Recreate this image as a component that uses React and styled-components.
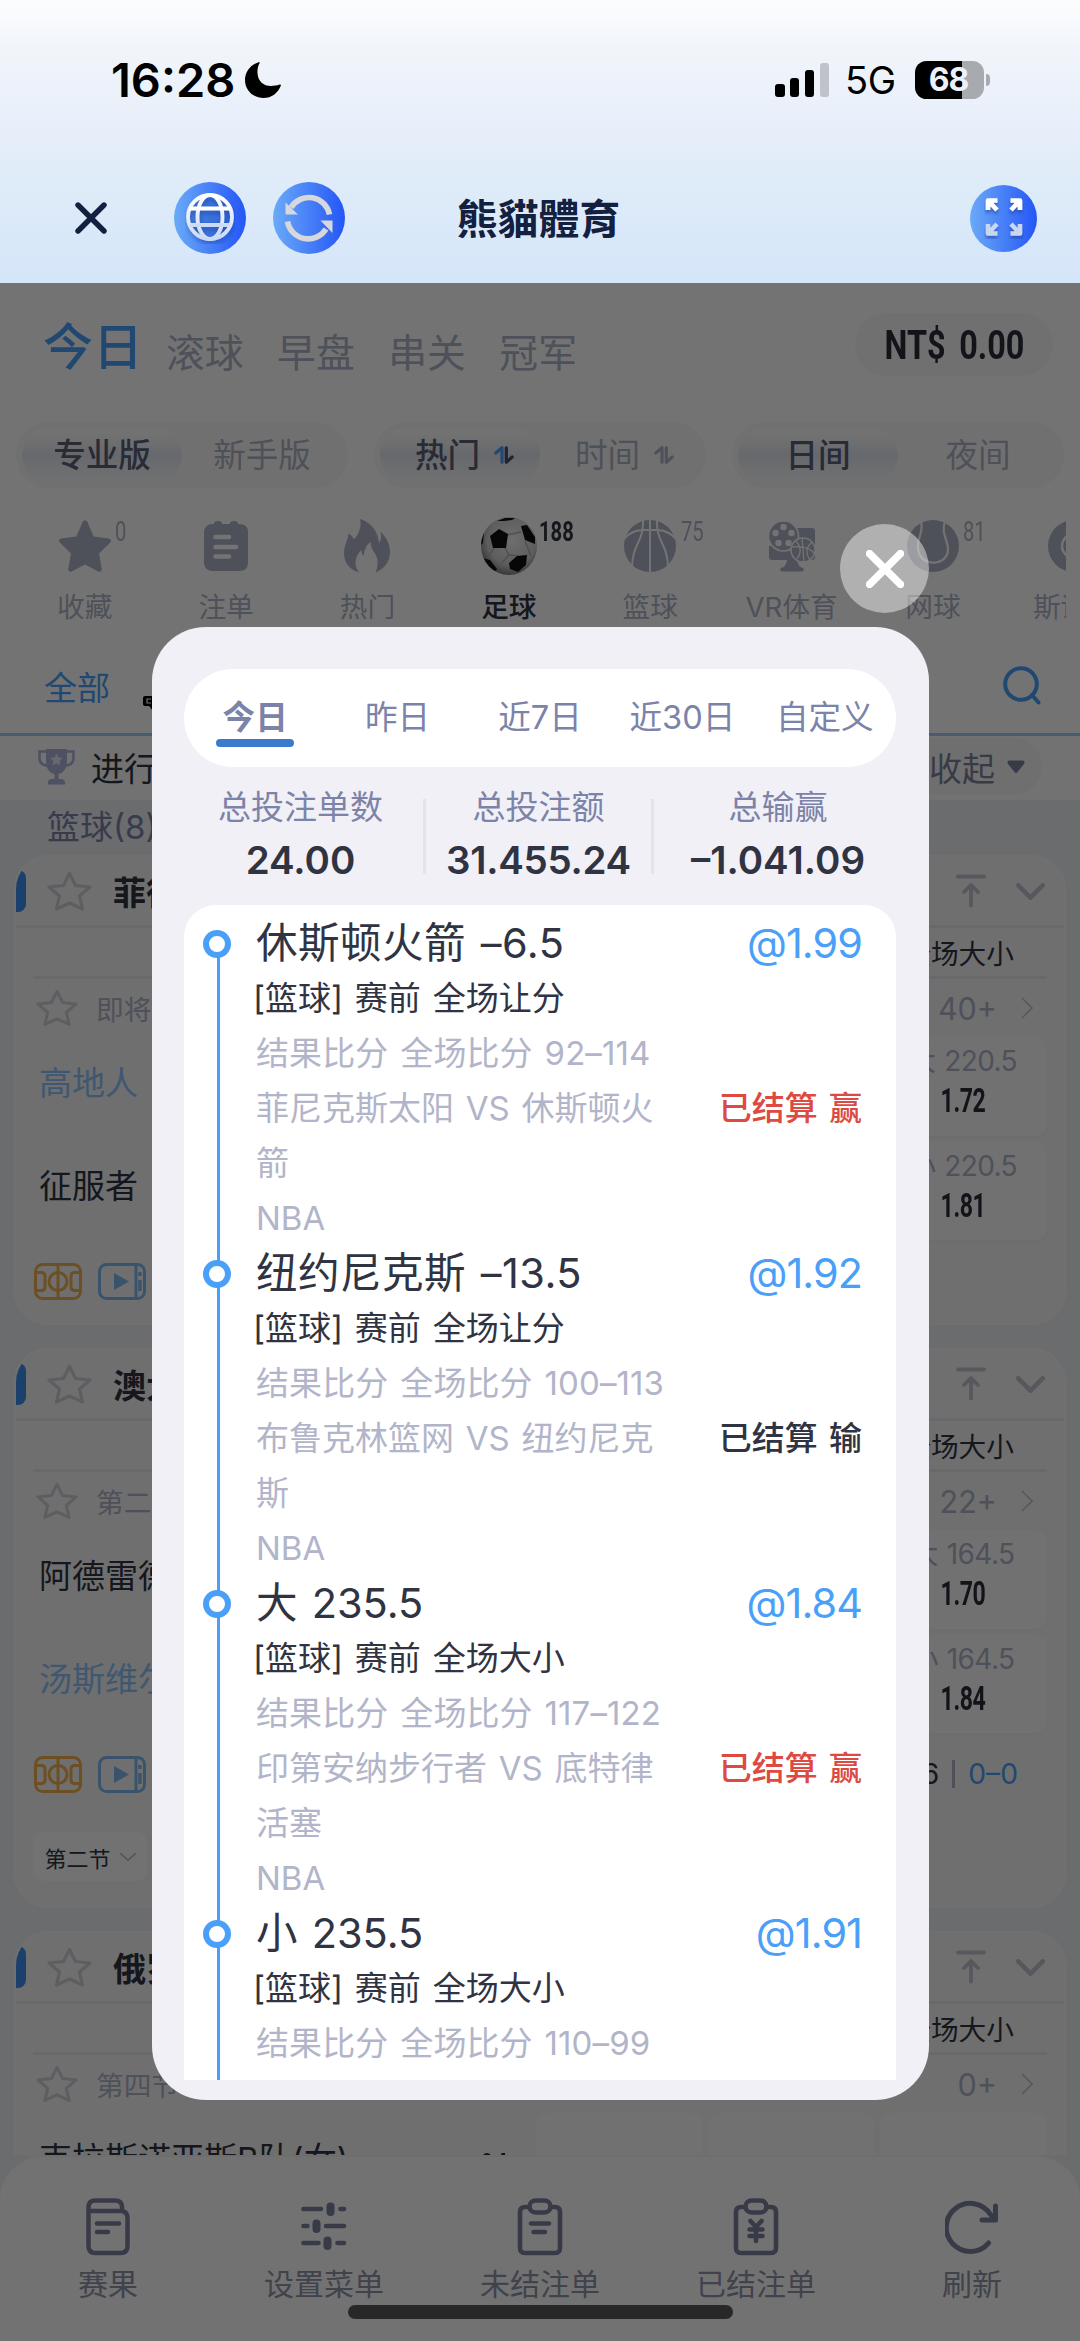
import React from "react";
import styled, { createGlobalStyle } from "styled-components";

const sans = `Inter, "Noto Sans CJK SC", sans-serif`;
const ink = "#303442";
const muted = "#aeb3c6";
const faint = "#c0c3d0";
const slate = "#7c83a8";
const blue = "#4a9ff9";

const Global = createGlobalStyle`
  *, *::before, *::after { box-sizing: border-box; }
  body { margin: 0; background: #fff; font-family: ${sans}; color: ${ink}; }
  svg { display: block; flex: none; }
`;

const Screen = styled.div`
  width: 1080px;
  height: 2341px;
  overflow: hidden;
  display: flex;
  flex-direction: column;
`;

/* ---------- header ---------- */

const Header = styled.header`
  height: 283px;
  flex: none;
  background: linear-gradient(#fdfdfe 0, #f1f5fa 48px, #ebf1fa 100px, #e8eef9 133px, #e0ecf8 168px, #d5e6fa 283px);
`;

const StatusBar = styled.div`
  height: 160px;
  padding: 0 90px 0 111px;
  display: flex;
  align-items: center;
  color: #000;
`;

const Clock = styled.span`
  font-size: 47px;
  font-weight: 600;
  letter-spacing: 0;
  width: 134px;
  line-height: 60px;
  white-space: nowrap;
`;

const StatusRight = styled.div`
  margin-left: auto;
  display: flex;
  align-items: center;
`;

const Bars = styled.div`
  display: flex;
  align-items: flex-end;
  gap: 5.5px;
  height: 34px;
  margin-right: 16px;
`;

const SignalBar = styled.i`
  width: 9.3px;
  height: ${(p) => p.$h}px;
  border-radius: 3px;
  background: ${(p) => (p.$off ? "#bfc2c9" : "#000")};
`;

const Network = styled.span`
  font-size: 38px;
  font-weight: 400;
  line-height: 40px;
  width: 70px;
  letter-spacing: -0.3px;
`;

const Battery = styled.div`
  width: 69px;
  height: 38px;
  border-radius: 11.5px;
  background: linear-gradient(90deg, #000 68%, #a7abaf 68%);
  color: #edf1fa;
  font-size: 32px;
  font-weight: 700;
  letter-spacing: -1px;
  line-height: 38px;
  text-align: center;
  padding-right: 2px;
`;

const BatteryTip = styled.i`
  width: 4px;
  height: 12px;
  margin-left: 2px;
  border-radius: 0 4px 4px 0;
  background: #a7abaf;
`;

const NavBar = styled.div`
  height: 116px;
  padding: 0 43px 0 75px;
  display: flex;
  align-items: center;
`;

const RoundIcon = styled.span`
  width: ${(p) => p.$size}px;
  height: ${(p) => p.$size}px;
  margin-left: ${(p) => p.$gap || 0}px;
  border-radius: 50%;
  background: linear-gradient(90deg, #6aaaf8, #2456f6);
  display: flex;
  align-items: center;
  justify-content: center;
`;

const Title = styled.h1`
  margin: 0 auto 2px 112px;
  font: 700 40.8px/60px "Noto Sans CJK TC", sans-serif;
  color: #13203f;
`;

/* ---------- page ---------- */

const Page = styled.main`
  position: relative;
  flex: 1;
  display: flex;
  flex-direction: column;
  overflow: hidden;
  background: #fff;
`;

const TopTabs = styled.div`
  height: 139px;
  flex: none;
  padding: 0 27px 0 43px;
  display: flex;
  align-items: flex-start;
`;

const TopTab = styled.span`
  font-size: ${(p) => (p.$active ? 50 : 38.8)}px;
  font-weight: ${(p) => (p.$active ? 500 : 400)};
  line-height: ${(p) => (p.$active ? 128 : 140)}px;
  color: ${(p) => (p.$active ? blue : muted)};
  margin-right: ${(p) => (p.$active ? 23 : 33.5)}px;
  white-space: nowrap;
`;

const Balance = styled.span`
  margin: 30px 0 0 auto;
  width: 198px;
  height: 63px;
  border-radius: 32px;
  background: #f8f8f8;
  display: flex;
  align-items: center;
  justify-content: center;
  word-spacing: 7px;
  padding-top: 2px;
`;

const Narrow = styled.span`
  display: inline-block;
  font-family: Roboto, sans-serif;
  font-weight: ${(p) => p.$weight || 700};
  font-size: ${(p) => p.$size}px;
  line-height: 1.2;
  white-space: pre;
  transform: scaleX(${(p) => p.$scale || 0.7});
  transform-origin: ${(p) => p.$origin || "center"};
  color: ${(p) => p.$color || "#2b2e3a"};
`;

const Toggles = styled.div`
  height: 66px;
  flex: none;
  padding: 0 16px;
  display: flex;
  justify-content: space-between;
`;

const Toggle = styled.div`
  width: 332px;
  padding: 5px 6px;
  border-radius: 33px;
  background: #f8f8f8;
  display: flex;
`;

const ToggleItem = styled.span`
  flex: 1;
  padding: 0 0 5px ${(p) => (p.$sortable ? 9 : 0)}px;
  border-radius: 28px;
  display: flex;
  align-items: center;
  justify-content: center;
  gap: 14px;
  font-size: 32.6px;
  font-weight: ${(p) => (p.$active ? 500 : 400)};
  color: ${(p) => (p.$active ? "#5b5f78" : muted)};
  background: ${(p) => (p.$active ? "linear-gradient(#fdfdfd 10%, #f2f3f6 32%, #e3e7f0 50%, #eef0f5 68%, #f7f9fc)" : "none")};
  svg { margin-top: 4px; }
`;

const Sports = styled.div`
  height: 153px;
  flex: none;
  margin: 0 14px;
  padding-top: 31px;
  display: flex;
  overflow: hidden;
`;

const Sport = styled.div`
  position: relative;
  width: 141.4px;
  flex: none;
  display: flex;
  flex-direction: column;
  align-items: center;
  gap: 15px;
  font-size: 27.7px;
  line-height: 38px;
  font-weight: ${(p) => (p.$active ? 500 : 400)};
  color: ${(p) => (p.$active ? ink : muted)};
  white-space: nowrap;
`;

const SportIcon = styled.span`
  height: 54px;
  display: flex;
  align-items: center;
  justify-content: center;
`;

const Count = styled.span`
  position: absolute;
  left: 101px;
  top: -7px;
`;

const LeagueRow = styled.div`
  height: 95px;
  flex: none;
  padding: 0 39px 3px 44px;
  display: flex;
  align-items: center;
  border-bottom: 3px solid #a3cdf6;
  font-size: 33px;
  color: ${blue};
`;

const LeagueLogo = styled.span`
  margin: 26px auto 0 33px;
`;

const Progress = styled.div`
  height: 64px;
  flex: none;
  padding: 0 38px 3px;
  display: flex;
  align-items: center;
  gap: 16px;
  background: #fcfcfc;
  font-size: 33px;
  color: ${ink};
`;

const Collapse = styled.span`
  margin-left: auto;
  height: 57px;
  padding: 0 17px 0 26px;
  border-radius: 28px;
  background: #f7f7f7;
  display: flex;
  align-items: center;
  gap: 12px;
  color: #7d8199;
`;

const Feed = styled.section`
  flex: 1;
  min-height: 0;
  overflow: hidden;
  background: #eeeff3;
  padding: 0 14px;
`;

const FeedHeading = styled.div`
  height: 55px;
  padding-left: 33px;
  font-size: 33px;
  line-height: 54px;
  color: ${slate};
`;

const Card = styled.article`
  height: ${(p) => p.$h}px;
  margin-bottom: 23px;
  border: 2px solid #f9f9fa;
  border-radius: 34px;
  background: #f6f6f6;
  overflow: hidden;
  display: flex;
  flex-direction: column;
`;

const CardHead = styled.div`
  height: 71px;
  flex: none;
  padding: 0 19px 0 0;
  display: flex;
  align-items: center;
  border-bottom: 3px solid #e8e9ed;
  font-size: 33px;
  font-weight: 700;
`;

const Marker = styled.i`
  width: 10px;
  height: 42px;
  margin-right: 21px;
  border-radius: 0 8px 8px 0;
  background: #3f8ff0;
`;

const CardTitle = styled.span`
  margin: 0 auto 0 21px;
`;

const HeadIcons = styled.span`
  display: flex;
  align-items: center;
  gap: 30px;
`;

const MarketHead = styled.div`
  height: 51px;
  flex: none;
  margin: 0 17px;
  padding-right: 33px;
  border-bottom: 3px solid #e8e9ed;
  display: flex;
  align-items: center;
  justify-content: flex-end;
  font-size: 27.7px;
`;

const MetaRow = styled.div`
  height: 58px;
  flex: none;
  padding: 0 31px 0 20px;
  display: flex;
  align-items: center;
  font-size: 27.7px;
  color: ${muted};
`;

const Period = styled.span`
  margin-left: 18px;
  width: 190px;
  white-space: nowrap;
`;

const Tick = styled.i`
  width: 2px;
  height: 32px;
  margin-left: 8px;
  background: #b9bcc9;
`;

const More = styled.span`
  margin: 0 24px 0 auto;
  font-size: 30.5px;
`;

const Match = styled.div`
  height: 203px;
  flex: none;
  padding: 0 17px 0 23px;
  display: flex;
  justify-content: space-between;
`;

const Teams = styled.div`
  flex: 1;
`;

const Team = styled.div`
  height: 103px;
  padding: 21px 23px 0 0;
  display: flex;
  justify-content: space-between;
  font-size: 33px;
  line-height: 50px;
  color: ${(p) => (p.$lead ? "#8cc2f8" : ink)};
  white-space: nowrap;
`;

const TeamScore = styled.span`
  padding-top: 6px;
`;

const OddsGrid = styled.div`
  display: grid;
  grid-template-columns: repeat(3, 167px);
  grid-auto-rows: 98.5px;
  gap: 6px 5px;
`;

const OddsCell = styled.div`
  border-radius: 12px;
  background: #fbfbfb;
  box-shadow: 0 3px 4px #f1f1f2;
  display: flex;
  flex-direction: column;
  align-items: center;
  padding: 4px 2px 0 0;
  font-size: 28px;
  line-height: 40px;
  color: ${muted};
  white-space: nowrap;
  letter-spacing: -0.6px;
`;

const OddsLine = styled.span`
  word-spacing: 1.5px;
`;

const MediaRow = styled.div`
  height: 82px;
  flex: none;
  padding: 0 46px 0 18px;
  display: flex;
  align-items: center;
  gap: 16px;
`;

const Scores = styled.span`
  margin-left: auto;
  display: flex;
  align-items: center;
  gap: 13px;
  font-size: 28.2px;
  color: ${ink};
`;

const ScoreRule = styled.i`
  width: 3px;
  height: 28px;
  background: ${muted};
`;

const ScoreBlue = styled.span`
  color: ${blue};
`;

const PeriodButton = styled.div`
  width: 114px;
  height: 49px;
  margin: 17px 0 0 17px;
  border-radius: 10px;
  background: #fcfcfc;
  display: flex;
  align-items: center;
  justify-content: center;
  gap: 9px;
  font-size: 22px;
`;

const TabBarWrap = styled.div`
  height: 186px;
  flex: none;
  background: #eeeff3;
`;

const TabBar = styled.nav`
  height: 186px;
  border-top: 2px solid #f4f4f6;
  border-radius: 44px 44px 0 0;
  background: #fdfdfd;
  padding-top: 41px;
  display: grid;
  grid-template-columns: repeat(5, 1fr);
`;

const TabItem = styled.div`
  display: flex;
  flex-direction: column;
  align-items: center;
  gap: 7px;
  font-size: 30px;
  line-height: 42px;
  color: #8f93a9;
`;

/* ---------- dialog ---------- */

const Overlay = styled.div`
  position: absolute;
  inset: 0;
  padding-top: 344px;
  background: rgba(0, 0, 0, 0.55);
`;

const Dialog = styled.div`
  position: relative;
  width: 777px;
  height: 1473px;
  margin-left: 152px;
  padding: 42px 33px 20px 32px;
  border-radius: 54px;
  background: #f1f0f6;
  display: flex;
  flex-direction: column;
`;

const Close = styled.button`
  position: absolute;
  right: 0;
  top: -103px;
  width: 89px;
  height: 89px;
  padding: 0;
  border: 0;
  border-radius: 50%;
  background: rgba(255, 255, 255, 0.44);
  display: flex;
  align-items: center;
  justify-content: center;
`;

const RangeTabs = styled.div`
  height: 98px;
  flex: none;
  border-radius: 49px;
  background: #fff;
  display: grid;
  grid-template-columns: repeat(5, 1fr);
`;

const RangeTab = styled.span`
  position: relative;
  text-align: center;
  font-size: 32.6px;
  line-height: 97px;
  font-weight: ${(p) => (p.$active ? 700 : 400)};
  color: ${slate};
  &::after {
    content: "";
    display: ${(p) => (p.$active ? "block" : "none")};
    width: 78px;
    height: 8px;
    margin: -27px auto 0;
    border-radius: 4px;
    background: #3a7ccb;
  }
`;

const Stats = styled.div`
  height: 138px;
  flex: none;
  margin: 0 -7px 0 -6px;
  padding-top: 15px;
  display: grid;
  grid-template-columns: 245px 231px 248px;
`;

const Stat = styled.div`
  text-align: center;
  font-size: 33px;
  line-height: 50px;
  color: ${slate};
`;

const StatValue = styled.div`
  font-size: 38.5px;
  line-height: 56px;
  font-weight: 600;
  color: ${ink};
  white-space: nowrap;
  letter-spacing: ${(p) => p.$ls || 0}px;
`;

const StatMiddle = styled(Stat)`
  background:
    linear-gradient(#e3e3e9, #e3e3e9) 0 17px / 3px 75px no-repeat,
    linear-gradient(#e3e3e9, #e3e3e9) 100% 17px / 3px 75px no-repeat;
`;

const BetList = styled.div`
  flex: 1;
  min-height: 0;
  padding: 11px 34px 0 19px;
  border-radius: 32px 32px 0 0;
  background: #fff;
  overflow: hidden;
`;

const Bet = styled.div`
  display: flex;
  height: 330px;
`;

const Rail = styled.div`
  width: 28px;
  flex: none;
  display: flex;
  flex-direction: column;
  align-items: center;
  padding-top: 14px;
  margin-right: 25px;
  background: linear-gradient(${blue}, ${blue}) 14px ${(p) => (p.$first ? "30px" : "0")} / 3px 100% no-repeat;
`;

const Dot = styled.i`
  width: 28px;
  height: 28px;
  border: 6px solid ${blue};
  border-radius: 50%;
  background: #fff;
`;

const BetMain = styled.div`
  width: 412px;
  flex: none;
  font-size: 33px;
  line-height: 55px;
  word-spacing: 2.5px;
  color: #b2b5c9;
`;

const BetTitle = styled.div`
  font-size: 41.5px;
  letter-spacing: ${(p) => (p.$wide ? 0.5 : 0)}px;
  color: ${ink};
  white-space: nowrap;
`;

const BetKind = styled.div`
  color: ${ink};
  white-space: nowrap;
  margin-left: -3px;
`;

const BetScore = styled.div`
  white-space: nowrap;
  letter-spacing: 0.1px;
`;

const BetMatch = styled.div``;

const BetSide = styled.div`
  flex: 1;
  display: flex;
  flex-direction: column;
  align-items: flex-end;
  line-height: 55px;
  white-space: nowrap;
`;

const Price = styled.div`
  height: 165px;
  font-size: 41.3px;
  letter-spacing: -0.9px;
  color: ${blue};
`;

const Outcome = styled.div`
  font-size: 33px;
  font-weight: 500;
  word-spacing: 2.5px;
  color: ${(p) => (p.$win ? "#dc4a42" : ink)};
`;

const HomeIndicator = styled.div`
  position: absolute;
  left: 348px;
  bottom: 22px;
  width: 385px;
  height: 14px;
  border-radius: 7px;
  background: #282828;
`;

/* ---------- icons ---------- */

const Cross = ({ size, width, color }) => (
  <svg width={size} height={size} viewBox="0 0 32 32" stroke={color} strokeWidth={width} strokeLinecap="round">
    <path d="M3 3 29 29M29 3 3 29" />
  </svg>
);

const Moon = () => (
  <svg width="36" height="36" viewBox="0 0 36 36">
    <path d="M13.6.2C14.4-.1 15 .4 14.5 1.3 12.700 4.600 12.300 8 12.500 11.200 13 19.200 18.500 24 26 24 29 24 32 23.600 34.600 22.600 35.600 22.200 36.200 22.800 35.800 23.700 33 31 26.500 36 18.500 36 8 36 0 28.200 0 18 0 9.600 5.600 2.600 13.600.2Z" />
  </svg>
);

const Globe = () => (
  <svg width="50" height="52" viewBox="0 0 50 52" fill="none">
    <defs>
      <linearGradient id="gl" x1="0" y1="0" x2="0" y2="1"><stop stopColor="#fff" /><stop offset="1" stopColor="#cbdaf5" /></linearGradient>
      <filter id="sh" x="-20%" y="-20%" width="150%" height="150%"><feDropShadow dx="1" dy="3" stdDeviation="2" floodColor="#123a9c" floodOpacity=".5" /></filter>
    </defs>
    <circle cx="25" cy="25" r="21.500" fill="#2e5fb8" fillOpacity=".45" />
    <g stroke="url(#gl)" strokeWidth="3.800" filter="url(#sh)">
      <circle cx="25" cy="25" r="22" />
      <ellipse cx="25" cy="25" rx="12.500" ry="22" />
      <path d="M5 16.500H45M5 33H45.100" />
    </g>
  </svg>
);

const Sync = () => (
  <svg width="50" height="50" viewBox="0 0 50 50" fill="none">
    <path d="M45.500 21.500A21 21 0 0 0 7 14.500M3.500 28.500A21 21 0 0 0 42 36" stroke="#d6d8dc" strokeWidth="5.600" />
    <path d="M1.500 9.500V21.500H14ZM48.500 40V27.500H36.500Z" fill="#d6d8dc" />
  </svg>
);

const Expand = () => (
  <svg width="40" height="42" viewBox="0 0 40 42" fill="none">
    <defs><filter id="se" x="-20%" y="-20%" width="150%" height="150%"><feDropShadow dx="0" dy="3" stdDeviation="1.600" floodColor="#1c3f96" floodOpacity=".55" /></filter></defs>
    <g filter="url(#se)" strokeWidth="4.600" strokeLinejoin="round">
      <path stroke="#fff" d="M4 13V3.500H13.500M4.500 4 13 13M36 13V3.500H26.500M35.500 4 27 13" />
      <path stroke="#c8d6ef" d="M4 27V36.500H13.500M4.500 36 13 27M36 27V36.500H26.500M35.500 36 27 27" />
    </g>
  </svg>
);

const SortIcon = ({ up, down }) => (
  <svg width="20" height="18" viewBox="0 0 20 18" fill="none" strokeWidth="3.200" strokeLinecap="round" strokeLinejoin="round">
    <path d="M1.800 7 8 1.800V16.200" stroke={up} />
    <path d="M12.300 1.800V16.200L18.200 11" stroke={down} />
  </svg>
);

const StarSolid = () => (
  <svg width="52" height="52" viewBox="0 0 52 52" fill={muted}>
    <path d="M23.700 1.700Q26-1.300 28.300 1.700L34.600 16.500 50 18.600Q53.300 20 51 22.800L40 33.500 42.800 49Q42.600 52.500 39.200 51.600L26 44.400 12.800 51.600Q9.400 52.500 9.200 49L12 33.500 1 22.800Q-1.300 20 2 18.600L17.400 16.500Z" />
  </svg>
);

const NoteSolid = () => (
  <svg width="44" height="52" viewBox="0 0 44 52">
    <path fill={muted} d="M10 4V3Q10.500 1 14 1T18 3V4H26V3Q26.500 1 30 1T34 3V4H36Q44 4.500 44 12V43Q44 50.500 36 51H8Q.5 50.500 0 43V12Q.5 4.500 8 4Z" />
    <path d="M11.500 17H25M11.500 27H32M11.500 36.500H25" stroke="#fff" strokeWidth="4.600" strokeLinecap="round" />
  </svg>
);

const Flame = () => (
  <svg width="46" height="54" viewBox="0 0 46 54" fill={muted}>
    <path d="M16 0C29 4 34 14 35 24 37.500 21 37.500 17 36.500 12.500 42 18 46 25 46 33 46 43 40 50 31.500 53.500 35 46 34 38 30 33 28.500 31 27 28 26.500 23 22 26 20.500 31 19.500 37 18 35.500 17.500 33.500 17.500 31 12 36 8.500 45 15 53.500 6 51 0 44 0 34 0 26 4 21 4.500 14.500 7 16 9.500 18 10 20.500 15 15 18 7 16 0Z" />
  </svg>
);

const Soccer = () => (
  <svg width="56" height="58" viewBox="0 0 56 58">
    <defs>
      <radialGradient id="ball" cx=".55" cy=".4" r=".62"><stop stopColor="#f4f4f4" /><stop offset=".7" stopColor="#cfcfcf" /><stop offset="1" stopColor="#787878" /></radialGradient>
      <clipPath id="bc"><ellipse cx="28" cy="29" rx="28" ry="29" /></clipPath>
    </defs>
    <ellipse cx="28" cy="29" rx="28" ry="29" fill="url(#ball)" />
    <g clipPath="url(#bc)">
      <g stroke="#b0b0b0" strokeWidth="1.500" fill="none"><path d="M24 31 28 38 37 39M26 18 40 15M13 31 7 40M28 38 20 47M44 24 50 39" /></g>
      <g fill="#111"><path d="M9 19 18 12 27 17 25 31 12 31ZM28 46 36 39 46 38 45 48 37 55 29 52ZM40 9 46 8 54 20V27L44 23ZM2 41 9 43 16 52 13 56 3 48ZM16 4 24 1 34 1 31 3 23 4ZM0 20 3 15 2 26 0 28Z" /></g>
    </g>
  </svg>
);

const BallClip = () => (
  <svg width="52" height="52" viewBox="0 0 52 52">
    <circle cx="26" cy="26" r="26" fill={muted} />
    <path d="M26 0V52M19 0C20 22 8 24 8 48M33 0C32 22 44 24 44 48M0 19C10 8 20 10 26 10S42 8 52 19" stroke="#fff" strokeWidth="2" fill="none" />
  </svg>
);

const VrIcon = () => (
  <svg width="48" height="52" viewBox="0 0 48 52">
    <path fill={muted} d="M1 26H47V37Q47 40 44 40H4Q1 40 1 37ZM28 8H44Q47 8 47 11V36H28ZM19 40H29Q30 47 35 48 37 51 34 51.500H14Q11 51 13 48 18 47 19 40Z" />
    <circle cx="15.500" cy="16" r="15" fill={muted} stroke="#fff" strokeWidth="1.600" />
    <g fill="#fff"><circle cx="15.500" cy="7" r="3.200" /><circle cx="7.500" cy="13" r="3.200" /><circle cx="23.500" cy="13" r="3.200" /><circle cx="10.500" cy="23" r="3.200" /><circle cx="20.500" cy="23" r="3.200" /></g>
    <circle cx="35" cy="30" r="12" fill={muted} stroke="#fff" strokeWidth="1.600" />
    <path d="M24 27C32 26 40 26 46 33M34 18 36 42M28 21Q36 30 29 39M44 22Q35 30 42 40" stroke="#fff" strokeWidth="1.300" fill="none" />
  </svg>
);

const Tennis = () => (
  <svg width="52" height="52" viewBox="0 0 52 52">
    <circle cx="26" cy="26" r="26" fill={muted} />
    <path d="M14 1C17 12 10 18 11 28 12 48 42 47 41 28 40 18 34 13 38 1" stroke="#fff" strokeWidth="2.200" fill="none" />
  </svg>
);

const Snooker = () => (
  <svg width="52" height="52" viewBox="0 0 52 52">
    <circle cx="26" cy="26" r="26" fill={muted} />
    <circle cx="26" cy="26" r="12" stroke="#fff" strokeWidth="2.500" fill="none" />
  </svg>
);

const LeagueMark = () => (
  <svg width="28" height="26" viewBox="0 0 28 26">
    <path d="M12 0 20 2V10H10Z" fill="#222" />
    <rect x="0" y="10" width="28" height="10" rx="2" fill="#000" />
    <path d="M6 20H18V25H10Z" fill="#000" />
    <path d="M8 13H4V17H8M10 13V17M10 15H13M13 13V17" stroke="#fff" strokeWidth="1.200" fill="none" />
  </svg>
);

const SearchIcon = () => (
  <svg width="38" height="40" viewBox="0 0 38 40" fill="none" stroke={blue} strokeWidth="4" strokeLinecap="round">
    <circle cx="18" cy="18" r="15.800" />
    <path d="M29 29 35.500 36.500" />
  </svg>
);

const Trophy = () => (
  <svg width="37" height="37" viewBox="0 0 37 37" fill="none">
    <path d="M8 1H29V13Q29 24 20.500 26V31H24Q27 32 27 34V36.500H10V34Q10 32 13 31H16.500V26Q8 24 8 13Z" fill="#adb4d8" />
    <path d="M8 3.500H1.500V11Q2 16.500 9 17.500M29 3.500H35.500V11Q35 16.500 28 17.500" stroke="#adb4d8" strokeWidth="2.600" />
    <path d="M18.500 5.500 20.400 9.500 24.800 10 21.600 13 22.400 17.300 18.500 15.200 14.600 17.300 15.400 13 12.200 10 16.600 9.500Z" fill="#e6e9f5" />
  </svg>
);

const StarLine = ({ size = 45 }) => (
  <svg width={size} height={size * 0.9} viewBox="0 0 45 40.500" fill="none" stroke="#cdd0da" strokeWidth="3.200" strokeLinejoin="round">
    <path d="M22.500 2.500 28.500 14.500 43 16 32.500 25 35.500 38 22.500 32 9.500 38 12.500 25 2 16 16.500 14.500Z" />
  </svg>
);

const ToTop = () => (
  <svg width="30" height="34" viewBox="0 0 30 34" fill="none" stroke={faint} strokeWidth="3.800" strokeLinecap="round" strokeLinejoin="round">
    <path d="M2 2.500H28M15 31.500V11.500M8 18 15 11 22 18" />
  </svg>
);

const Chevron = ({ w = 29, h = 17, stroke = 4.6, color = faint }) => (
  <svg width={w} height={h} viewBox={`0 0 ${w} ${h}`} fill="none" stroke={color} strokeWidth={stroke} strokeLinecap="round" strokeLinejoin="round">
    <path d={`M${stroke / 2} ${stroke / 2} ${w / 2} ${h - stroke / 2} ${w - stroke / 2} ${stroke / 2}`} />
  </svg>
);

const Forward = () => (
  <svg width="12" height="22" viewBox="0 0 12 22" fill="none" stroke={faint} strokeWidth="1.600">
    <path d="M1 1 11 11 1 21" />
  </svg>
);

const Court = () => (
  <svg width="48" height="37" viewBox="0 0 48 37" fill="none" stroke="#f0b250" strokeWidth="3">
    <rect x="1.500" y="1.500" width="45" height="34" rx="7" />
    <path d="M24 1.500V35.500M2 9.500H8Q11 10 11 13V24Q11 27 8 27.500H2M46 9.500H40Q37 10 37 13V24Q37 27 40 27.500H46" />
    <circle cx="24" cy="18.500" r="9" />
  </svg>
);

const Video = () => (
  <svg width="48" height="37" viewBox="0 0 48 37" fill="none" stroke="#7fb8f2" strokeWidth="3">
    <rect x="1.500" y="1.500" width="45" height="34" rx="7" />
    <path d="M38 1.500V35.500" />
    <path d="M16 10V27L31 18.500Z" fill="#7fb8f2" stroke="none" />
    <path d="M42 9V13M42 17V28" strokeWidth="3.400" />
  </svg>
);

const tabStroke = { fill: "none", stroke: "#7d82a0", strokeWidth: 5, strokeLinecap: "round", strokeLinejoin: "round" };

const ResultIcon = () => (
  <svg width="44" height="58" viewBox="0 0 44 58" {...tabStroke}>
    <path d="M2.500 13V48Q2.500 55 9.500 55H34.500Q41.500 55 41.500 48V20Q41.500 13 34.500 13H2.500V9Q2.500 2.500 9.500 2.500H29Q36 2.500 36 9V13M11 25.500H33M11 34H22" strokeWidth="4.500" />
  </svg>
);

const SettingsIcon = () => (
  <svg width="46" height="58" viewBox="0 0 46 58" {...tabStroke}>
    <path d="M2.500 11H20M39.500 11H43M2.500 28H6.500M25 28H43M2.500 45H17.500M36.500 45H43" strokeWidth="4.600" />
    <path d="M29.500 8.500V14M15.500 25.500V31M26.500 42.500V48" strokeWidth="8" />
  </svg>
);

const ClipIcon = ({ yen }) => (
  <svg width="46" height="58" viewBox="0 0 46 58" {...tabStroke} strokeWidth="4.600">
    <path d="M10 9H8Q3 9 3 14V50Q3 55 8 55H38Q43 55 43 50V14Q43 9 38 9H36" />
    <rect x="12.500" y="2.500" width="21" height="12" rx="6" />
    {yen ? <path d="M17.500 23 23 29 28.500 23M23 30V43M16.500 31.500H29.500M16.500 38H29.500" /> : <path d="M14 25.500H32M16.500 34H28" />}
  </svg>
);

const RefreshIcon = () => (
  <svg width="54" height="58" viewBox="0 0 54 58" {...tabStroke}>
    <path d="M43.500 45A24 24 0 1 1 45.500 16.500L49 21" />
    <path d="M50.500 8V22H37" />
  </svg>
);

/* ---------- data ---------- */

const sports = [
  { name: "收藏", icon: <StarSolid />, count: "0" },
  { name: "注单", icon: <NoteSolid /> },
  { name: "热门", icon: <Flame /> },
  { name: "足球", icon: <Soccer />, count: "188", active: true },
  { name: "篮球", icon: <BallClip />, count: "75" },
  { name: "VR体育", icon: <VrIcon /> },
  { name: "网球", icon: <Tennis />, count: "81" },
  { name: "斯诺克", icon: <Snooker /> },
];

const matches = [
  { h: 470, league: "菲律宾杯", period: "即将开赛", more: "40+", teams: ["高地人", "征服者"], lead: 0, line: "220.5", odds: ["1.72", "1.81"] },
  { h: 560, league: "澳大利亚", period: "第二节", more: "22+", teams: ["阿德雷德", "汤斯维尔"], lead: 1, line: "164.5", odds: ["1.70", "1.84"], scores: true },
  { h: 560, league: "俄罗斯", period: "第四节", more: "0+", tick: true, teams: ["克拉斯诺亚斯B队(女)", ""], score: "94" },
];

const bets = [
  { title: "休斯顿火箭 –6.5", wide: true, odds: "@1.99", kind: "[篮球] 赛前 全场让分", score: "92–114", match: "菲尼克斯太阳 VS 休斯顿火箭", win: true },
  { title: "纽约尼克斯 –13.5", wide: true, odds: "@1.92", kind: "[篮球] 赛前 全场让分", score: "100–113", match: "布鲁克林篮网 VS 纽约尼克斯", win: false },
  { title: "大 235.5", odds: "@1.84", kind: "[篮球] 赛前 全场大小", score: "117–122", match: "印第安纳步行者 VS 底特律活塞", win: true },
  { title: "小 235.5", odds: "@1.91", kind: "[篮球] 赛前 全场大小", score: "110–99" },
];

function MatchCard({ m }) {
  return (
    <Card $h={m.h}>
      <CardHead>
        <Marker />
        <StarLine />
        <CardTitle>{m.league}</CardTitle>
        <HeadIcons><ToTop /><Chevron /></HeadIcons>
      </CardHead>
      <MarketHead>全场大小</MarketHead>
      <MetaRow>
        <StarLine size={42} />
        <Period>{m.period}</Period>
        {m.tick && <Tick />}
        <More>{m.more}</More>
        <Forward />
      </MetaRow>
      <Match>
        <Teams>
          {m.teams.map((t, i) => (
            <Team key={i} $lead={m.lead === i}>
              {t}
              {i === 0 && m.score && <TeamScore><Narrow $size={33} $scale={0.72}>{m.score}</Narrow></TeamScore>}
            </Team>
          ))}
        </Teams>
        <OddsGrid>
          {[0, 1, 2, 3, 4, 5].map((i) => (
            <OddsCell key={i}>
              {m.odds && i % 3 === 2 && (
                <>
                  <OddsLine>{i === 2 ? "大" : "小"} {m.line}</OddsLine>
                  <Narrow $size={33} $scale={0.7}>{m.odds[i === 2 ? 0 : 1]}</Narrow>
                </>
              )}
            </OddsCell>
          ))}
        </OddsGrid>
      </Match>
      <MediaRow>
        <Court />
        <Video />
        {m.scores && <Scores>6<ScoreRule /><ScoreBlue>0–0</ScoreBlue></Scores>}
      </MediaRow>
      {m.scores && <PeriodButton>第二节<Chevron w={16} h={8} stroke={1.5} color={muted} /></PeriodButton>}
    </Card>
  );
}

export default function App() {
  return (
    <Screen>
      <Global />
      <Header>
        <StatusBar>
          <Clock>16:28</Clock>
          <Moon />
          <StatusRight>
            <Bars><SignalBar $h={13} /><SignalBar $h={19} /><SignalBar $h={27} /><SignalBar $h={34} $off /></Bars>
            <Network>5G</Network>
            <Battery>68</Battery>
            <BatteryTip />
          </StatusRight>
        </StatusBar>
        <NavBar>
          <Cross size={32} width={5.4} color="#13203f" />
          <RoundIcon $size={72} $gap={67}><Globe /></RoundIcon>
          <RoundIcon $size={72} $gap={27}><Sync /></RoundIcon>
          <Title>熊貓體育</Title>
          <RoundIcon $size={67}><Expand /></RoundIcon>
        </NavBar>
      </Header>

      <Page>
        <TopTabs>
          <TopTab $active>今日</TopTab>
          {["滚球", "早盘", "串关", "冠军"].map((t) => <TopTab key={t}>{t}</TopTab>)}
          <Balance><Narrow $size={41} $scale={0.79}>NT$ 0.00</Narrow></Balance>
        </TopTabs>
        <Toggles>
          <Toggle><ToggleItem $active>专业版</ToggleItem><ToggleItem>新手版</ToggleItem></Toggle>
          <Toggle>
            <ToggleItem $active $sortable>热门<SortIcon up={blue} down="#4a4e6a" /></ToggleItem>
            <ToggleItem $sortable>时间<SortIcon up={muted} down={muted} /></ToggleItem>
          </Toggle>
          <Toggle><ToggleItem $active>日间</ToggleItem><ToggleItem>夜间</ToggleItem></Toggle>
        </Toggles>
        <Sports>
          {sports.map((s) => (
            <Sport key={s.name} $active={s.active}>
              <SportIcon>{s.icon}</SportIcon>
              {s.name}
              {s.count && (
                <Count>
                  <Narrow $size={28} $scale={0.72} $origin="left" $weight={s.active ? 700 : 400} $color={s.active ? ink : muted}>{s.count}</Narrow>
                </Count>
              )}
            </Sport>
          ))}
        </Sports>
        <LeagueRow>
          全部
          <LeagueLogo><LeagueMark /></LeagueLogo>
          <SearchIcon />
        </LeagueRow>
        <Progress>
          <Trophy />
          进行中
          <Collapse>
            收起
            <svg width="18" height="14" viewBox="0 0 18 14" fill="#7d82a0"><path d="M2 .5H16Q18.500 1.500 17 4L10.500 12Q9 14 7.500 12L1 4Q-.5 1.500 2 .5Z" /></svg>
          </Collapse>
        </Progress>
        <Feed>
          <FeedHeading>篮球(8)</FeedHeading>
          {matches.map((m) => <MatchCard key={m.league} m={m} />)}
        </Feed>
        <TabBarWrap>
          <TabBar>
            <TabItem><ResultIcon />赛果</TabItem>
            <TabItem><SettingsIcon />设置菜单</TabItem>
            <TabItem><ClipIcon />未结注单</TabItem>
            <TabItem><ClipIcon yen />已结注单</TabItem>
            <TabItem><RefreshIcon />刷新</TabItem>
          </TabBar>
        </TabBarWrap>

        <Overlay>
          <Dialog>
            <Close aria-label="关闭"><Cross size={38} width={6.4} color="#fff" /></Close>
            <RangeTabs>
              <RangeTab $active>今日</RangeTab>
              {["昨日", "近7日", "近30日", "自定义"].map((t) => <RangeTab key={t}>{t}</RangeTab>)}
            </RangeTabs>
            <Stats>
              <Stat>总投注单数<StatValue>24.00</StatValue></Stat>
              <StatMiddle>总投注额<StatValue $ls={-0.3}>31.455.24</StatValue></StatMiddle>
              <Stat>总输赢<StatValue>–1.041.09</StatValue></Stat>
            </Stats>
            <BetList>
              {bets.map((b, i) => (
                <Bet key={b.title}>
                  <Rail $first={i === 0}><Dot /></Rail>
                  <BetMain>
                    <BetTitle $wide={b.wide}>{b.title}</BetTitle>
                    <BetKind>{b.kind}</BetKind>
                    <BetScore>结果比分 全场比分 {b.score}</BetScore>
                    {b.match && <BetMatch>{b.match}</BetMatch>}
                    {b.match && <BetMatch>NBA</BetMatch>}
                  </BetMain>
                  <BetSide>
                    <Price>{b.odds}</Price>
                    {b.match && <Outcome $win={b.win}>已结算 {b.win ? "赢" : "输"}</Outcome>}
                  </BetSide>
                </Bet>
              ))}
            </BetList>
          </Dialog>
        </Overlay>
        <HomeIndicator />
      </Page>
    </Screen>
  );
}
